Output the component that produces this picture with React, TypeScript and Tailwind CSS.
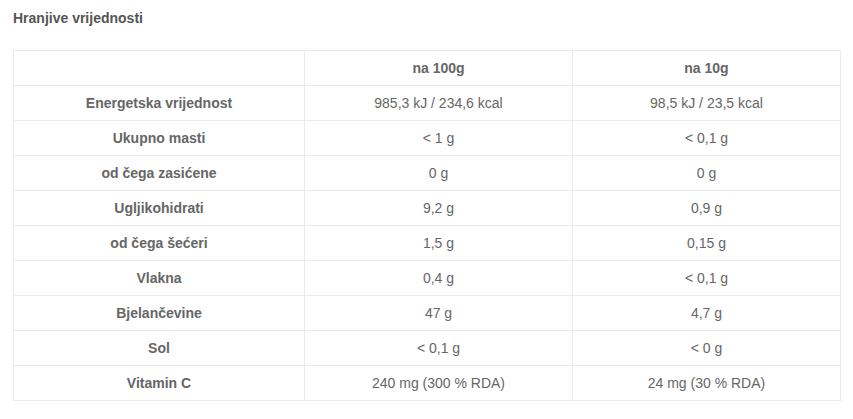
import React from "react";

const rows: [string, string, string][] = [
  ["Energetska vrijednost", "985,3 kJ / 234,6 kcal", "98,5 kJ / 23,5 kcal"],
  ["Ukupno masti", "< 1 g", "< 0,1 g"],
  ["od čega zasićene", "0 g", "0 g"],
  ["Ugljikohidrati", "9,2 g", "0,9 g"],
  ["od čega šećeri", "1,5 g", "0,15 g"],
  ["Vlakna", "0,4 g", "< 0,1 g"],
  ["Bjelančevine", "47 g", "4,7 g"],
  ["Sol", "< 0,1 g", "< 0 g"],
  ["Vitamin C", "240 mg (300 % RDA)", "24 mg (30 % RDA)"],
];

export default function App() {
  return (
    <div className="w-[853px] h-[419px] bg-white text-[#666] text-[14px]" style={{ fontFamily: '"Liberation Sans", Arial, sans-serif' }}>
      <div className="pl-[13px] pt-[9px] h-[50px]">
        <h2 className="font-bold text-[14px] leading-[18px] text-[#555]">Hranjive vrijednosti</h2>
      </div>
      <table className="ml-[13px] w-[827px] border-collapse table-fixed">
        <colgroup>
          <col className="w-[291px]" />
          <col className="w-[268px]" />
          <col className="w-[268px]" />
        </colgroup>
        <thead>
          <tr className="h-[35px]">
            <th className="border border-[#ebebeb]"></th>
            <th className="border border-[#ebebeb] font-bold text-center">na 100g</th>
            <th className="border border-[#ebebeb] font-bold text-center">na 10g</th>
          </tr>
        </thead>
        <tbody>
          {rows.map((r) => (
            <tr key={r[0]} className="h-[35px]">
              <td className="border border-[#ebebeb] font-bold text-center">{r[0]}</td>
              <td className="border border-[#ebebeb] text-center">{r[1]}</td>
              <td className="border border-[#ebebeb] text-center">{r[2]}</td>
            </tr>
          ))}
        </tbody>
      </table>
    </div>
  );
}
